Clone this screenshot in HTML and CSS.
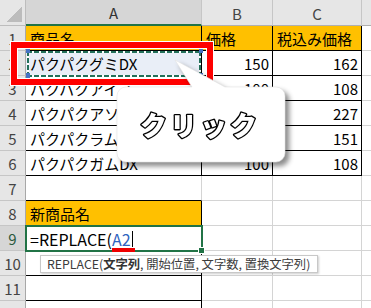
FILE: index.html
```html
<!DOCTYPE html>
<html lang="ja">
<head>
<meta charset="utf-8">
<title>REPLACE</title>
<link rel="stylesheet" href="styles.css">
</head>
<body>
<div class="sheet">
  <div class="grid">
    <div class="corner"><span class="tri"></span></div>
    <div class="ch active">A</div>
    <div class="ch">B</div>
    <div class="ch">C</div>
    <div class="ch"></div>

    <div class="rh">1</div>
    <div class="c or br bb">商品名</div>
    <div class="c or br bb">価格</div>
    <div class="c or br bb">税込み価格</div>
    <div class="c"></div>

    <div class="rh">2</div>
    <div class="c sel br bb"><span class="ants"></span><span class="hd tl"></span><span class="hd tr"></span><span class="hd bl"></span><span class="hd brc"></span>パクパクグミDX</div>
    <div class="c num br bb">150</div>
    <div class="c num br bb">162</div>
    <div class="c"></div>

    <div class="rh">3</div>
    <div class="c br bb">パクパクアイス</div>
    <div class="c num br bb">100</div>
    <div class="c num br bb">108</div>
    <div class="c"></div>

    <div class="rh">4</div>
    <div class="c br bb">パクパクアソート</div>
    <div class="c num br bb"></div>
    <div class="c num br bb">227</div>
    <div class="c"></div>

    <div class="rh">5</div>
    <div class="c br bb">パクパクラムネ</div>
    <div class="c num br bb"></div>
    <div class="c num br bb">151</div>
    <div class="c"></div>

    <div class="rh">6</div>
    <div class="c br bb">パクパクガムDX</div>
    <div class="c num br bb">100</div>
    <div class="c num br bb">108</div>
    <div class="c"></div>

    <div class="rh">7</div>
    <div class="c bb"></div>
    <div class="c"></div>
    <div class="c"></div>
    <div class="c"></div>

    <div class="rh">8</div>
    <div class="c or br bb">新商品名</div>
    <div class="c"></div>
    <div class="c"></div>
    <div class="c"></div>

    <div class="rh active">9</div>
    <div class="c br bb active-cell"><span class="formula">=REPLACE(<span class="ref">A2</span><span class="caret"></span></span><span class="fill"></span></div>
    <div class="c"></div>
    <div class="c"></div>
    <div class="c"></div>

    <div class="rh">10</div>
    <div class="c br bb"></div>
    <div class="c"></div>
    <div class="c"></div>
    <div class="c"></div>

    <div class="rh">11</div>
    <div class="c br bb"></div>
    <div class="c"></div>
    <div class="c"></div>
    <div class="c"></div>

    <div class="rh"></div>
    <div class="c br bb"></div>
    <div class="c"></div>
    <div class="c"></div>
    <div class="c"></div>
  </div>

  <div class="frame"></div>

  <svg class="callout" width="190" height="122" viewBox="0 0 190 122">
    <path d="M16 32 H82 L65 5 L115 32 H166 A9 9 0 0 1 175 41 V98 A9 9 0 0 1 166 107 H16 A9 9 0 0 1 7 98 V41 A9 9 0 0 1 16 32 Z" fill="#fff" stroke="#e2e2e2" stroke-width="0.6"/>
    <text class="click" x="90" y="81" text-anchor="middle">クリック</text>
  </svg>

  <div class="underline"></div>

  <div class="tip">REPLACE(<b>文字列</b>, 開始位置, 文字数, 置換文字列)</div>
</div>
</body>
</html>
```

FILE: styles.css
```css
html, body {
  margin: 0;
  padding: 0;
  background: #fff;
}
body {
  width: 371px;
  height: 308px;
  overflow: hidden;
  font-family: "Noto Sans CJK JP", "Noto Sans", sans-serif;
}
.sheet {
  position: relative;
  width: 371px;
  height: 308px;
  overflow: hidden;
}
.grid {
  display: grid;
  grid-template-columns: 26px 176px 71px 89px 40px;
  grid-template-rows: 26px repeat(12, 25px);
}
.grid > div {
  box-sizing: border-box;
}
.corner {
  background: #e6e6e6;
  border-right: 1px solid #bdbdbd;
  border-bottom: 1px solid #bdbdbd;
  display: flex;
  justify-content: flex-end;
  align-items: flex-end;
  padding: 0 3px 3px 0;
}
.tri {
  width: 15px;
  height: 15px;
  background: linear-gradient(135deg, transparent 50%, #bcbcbc 50%);
}
.ch {
  background: #e6e6e6;
  border-right: 1px solid #c6c6c6;
  border-bottom: 1px solid #b0b0b0;
  color: #444;
  font-size: 15px;
  display: flex;
  align-items: center;
  justify-content: center;
  padding-top: 1px;
}
.ch.active {
  background: #d6d6d6;
  border-bottom: 2px solid #217346;
  color: #333;
}
.rh {
  background: #e6e6e6;
  border-right: 1px solid #a8a8a8;
  border-bottom: 1px solid #c6c6c6;
  color: #444;
  font-size: 15px;
  display: flex;
  align-items: center;
  justify-content: center;
  padding-top: 1px;
}
.rh.active {
  background: #d6d6d6;
  color: #2b5a3d;
}
.c {
  position: relative;
  border-right: 1px solid #d4d4d4;
  border-bottom: 1px solid #d4d4d4;
  font-size: 15px;
  color: #000;
  display: flex;
  align-items: center;
  padding: 1px 3px 0 4px;
  white-space: nowrap;
  letter-spacing: 0;
}
.c.br { border-right-color: #000; }
.c.bb { border-bottom-color: #000; }
.c.or { background: #ffc000; }
.c.num { justify-content: flex-end; }
.c.sel { background: #e9eef7; }

.ants {
  position: absolute;
  left: 1px;
  top: 0;
  right: 0;
  bottom: -2px;
  background:
    repeating-linear-gradient(90deg, #23705a 0 5px, #fff 5px 7px) left top / 100% 2px no-repeat,
    repeating-linear-gradient(90deg, #23705a 0 5px, #fff 5px 7px) left bottom / 100% 2px no-repeat,
    repeating-linear-gradient(180deg, #23705a 0 5px, #fff 5px 7px) left top / 2px 100% no-repeat,
    repeating-linear-gradient(180deg, #23705a 0 5px, #fff 5px 7px) right top / 2px 100% no-repeat;
}
.hd {
  position: absolute;
  width: 4px;
  height: 5px;
  background: #4472c4;
}
.hd.tl { left: 0; top: -3px; }
.hd.tr { right: -2px; top: -3px; }
.hd.bl { left: 0; bottom: -3px; }
.hd.brc { right: -2px; bottom: -3px; }

.active-cell::before {
  content: "";
  position: absolute;
  left: -1px;
  top: -1px;
  right: -2px;
  bottom: -2px;
  border: 2px solid #217346;
}
.formula {
  font-size: 16px;
  display: inline-flex;
  align-items: center;
}
.ref { color: #2f64c0; }
.caret {
  display: inline-block;
  width: 1px;
  height: 16px;
  background: #000;
  margin-left: 1px;
}
.fill {
  position: absolute;
  right: -4px;
  bottom: -4px;
  width: 5px;
  height: 5px;
  background: #217346;
  border: 1px solid #fff;
  z-index: 2;
}

.frame {
  position: absolute;
  left: 11px;
  top: 42px;
  width: 202px;
  height: 43px;
  box-sizing: border-box;
  border: 6px solid #ff0000;
  box-shadow: 0 0 0 1px #fff, inset 0 0 0 1px #fff;
}
.callout {
  position: absolute;
  left: 110px;
  top: 55px;
  filter: drop-shadow(4px 4px 2.5px rgba(0, 0, 0, 0.45));
}
.click {
  font-family: "Noto Sans CJK JP", sans-serif;
  font-size: 27px;
  font-weight: 900;
  letter-spacing: 3px;
  fill: #fff;
  stroke: #000;
  stroke-width: 2.6px;
  stroke-linejoin: round;
  paint-order: stroke fill;
}
.underline {
  position: absolute;
  left: 112px;
  top: 248px;
  width: 23px;
  height: 4px;
  background: #ee0000;
}
.tip {
  position: absolute;
  left: 40px;
  top: 255px;
  width: 278px;
  height: 18px;
  box-sizing: border-box;
  background: #fff;
  border: 1px solid #c8c8c8;
  box-shadow: 1px 1px 2px rgba(0, 0, 0, 0.2);
  font-size: 12.3px;
  line-height: 16px;
  color: #3c3c3c;
  padding-left: 6px;
  white-space: nowrap;
}
.tip b { font-weight: 700; color: #333; }
```
